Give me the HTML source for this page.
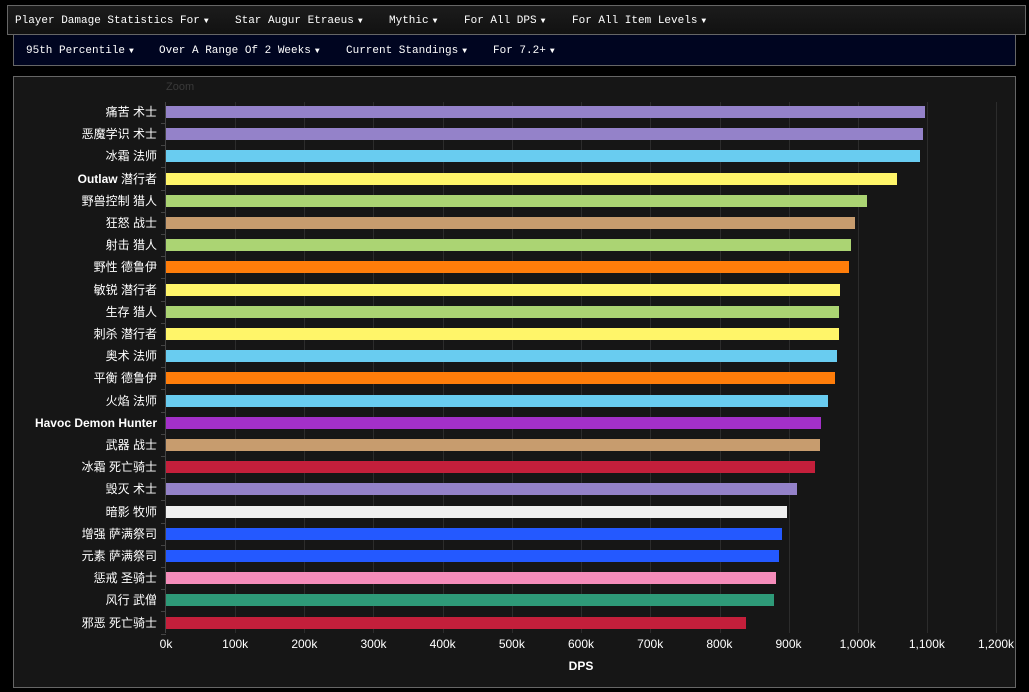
<!DOCTYPE html>
<html><head><meta charset="utf-8"><style>
*{margin:0;padding:0;box-sizing:border-box}
body{width:1029px;height:692px;background:#000;position:relative;overflow:hidden;font-family:"Liberation Sans","Noto Sans CJK SC",sans-serif;color:#fff}
.bar1{position:absolute;left:7px;top:5px;width:1019px;height:30px;background:linear-gradient(#1c1c1c,#111);border:1px solid #666}
.bar2{position:absolute;left:13px;top:35px;width:1003px;height:31px;background:#000520;border:1px solid #666;border-top:none}
.m{position:absolute;font-family:"Liberation Mono",monospace;font-size:11px;white-space:nowrap;line-height:14px}
.c{font-size:8px;margin-left:4px}
.panel{position:absolute;left:13px;top:76px;width:1003px;height:612px;background:#161616;border:1px solid #666}
.zoom{position:absolute;left:166px;top:81px;font-size:11px;color:#3a3a3a}
.grid{position:absolute;top:102px;width:1px;height:531px;background:#2c2c2c}
.lbl{position:absolute;right:872px;font-size:12px;white-space:nowrap;line-height:14px}
.b{position:absolute;left:166px;height:12px}
.tick{position:absolute;top:637px;font-size:12px;transform:translateX(-50%)}
.tk{position:absolute;left:161px;width:5px;height:1px;background:#444}
</style></head><body>
<div class="bar1"></div>
<div class="bar2"></div>
<div class="m" style="left:15px;top:14px">Player Damage Statistics For<span class="c">▼</span></div>
<div class="m" style="left:235px;top:14px">Star Augur Etraeus<span class="c">▼</span></div>
<div class="m" style="left:389px;top:14px">Mythic<span class="c">▼</span></div>
<div class="m" style="left:464px;top:14px">For All DPS<span class="c">▼</span></div>
<div class="m" style="left:572px;top:14px">For All Item Levels<span class="c">▼</span></div>
<div class="m" style="left:26px;top:44px">95th Percentile<span class="c">▼</span></div>
<div class="m" style="left:159px;top:44px">Over A Range Of 2 Weeks<span class="c">▼</span></div>
<div class="m" style="left:346px;top:44px">Current Standings<span class="c">▼</span></div>
<div class="m" style="left:493px;top:44px">For 7.2+<span class="c">▼</span></div>
<div class="panel"></div>
<div class="zoom">Zoom</div>
<div style="position:absolute;left:165px;top:102px;width:1px;height:531px;background:#444"></div>
<div class="grid" style="left:235px"></div><div class="grid" style="left:304px"></div><div class="grid" style="left:373px"></div><div class="grid" style="left:443px"></div><div class="grid" style="left:512px"></div><div class="grid" style="left:581px"></div><div class="grid" style="left:650px"></div><div class="grid" style="left:720px"></div><div class="grid" style="left:789px"></div><div class="grid" style="left:858px"></div><div class="grid" style="left:927px"></div><div class="grid" style="left:996px"></div>
<div id="rows"></div>
<script>
var d=[["痛苦 术士",925,"#9482c9"],["恶魔学识 术士",923,"#9482c9"],["冰霜 法师",920,"#69ccf0"],["<b>Outlaw</b> 潜行者",897,"#fff569"],["野兽控制 猎人",867,"#abd473"],["狂怒 战士",855,"#c79c6e"],["射击 猎人",851,"#abd473"],["野性 德鲁伊",849,"#ff7d0a"],["敏锐 潜行者",840,"#fff569"],["生存 猎人",839,"#abd473"],["刺杀 潜行者",839,"#fff569"],["奥术 法师",837,"#69ccf0"],["平衡 德鲁伊",835,"#ff7d0a"],["火焰 法师",828,"#69ccf0"],["<b>Havoc Demon Hunter</b>",821,"#a330c9"],["武器 战士",820,"#c79c6e"],["冰霜 死亡骑士",815,"#c41f3b"],["毁灭 术士",797,"#9482c9"],["暗影 牧师",787,"#f0f0f0"],["增强 萨满祭司",782,"#2459ff"],["元素 萨满祭司",779,"#2459ff"],["惩戒 圣骑士",776,"#f58cba"],["风行 武僧",774,"#2e9a78"],["邪恶 死亡骑士",746,"#c41f3b"]];
var h="";
for(var i=0;i<d.length;i++){var y=112+i*22.2;
h+='<div class="lbl" style="top:'+(y-7)+'px">'+d[i][0]+'</div>';
h+='<div class="b" style="top:'+(y-6)+'px;width:'+(d[i][1]-166)+'px;background:'+d[i][2]+'"></div>';
h+='<div class="tk" style="top:'+(y+11)+'px"></div>';}
var t=["0k","100k","200k","300k","400k","500k","600k","700k","800k","900k","1,000k","1,100k","1,200k"];
for(var j=0;j<t.length;j++){h+='<div class="tick" style="left:'+(166+j*69.17)+'px">'+t[j]+'</div>';}
h+='<div class="tick" style="left:581px;top:659px;font-weight:bold">DPS</div>';
document.getElementById("rows").innerHTML=h;
</script>
</body></html>
